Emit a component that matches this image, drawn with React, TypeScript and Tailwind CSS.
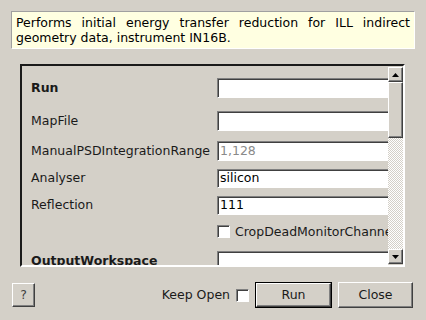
import React from "react";

const raised =
  "border border-t-white border-l-white border-r-[#404040] border-b-[#404040] shadow-[inset_-1px_-1px_0_#808080]";
const sunken =
  "border border-t-[#808080] border-l-[#808080] border-r-white border-b-white shadow-[inset_1px_1px_0_#404040]";

function Field({ value, muted, h = "h-[20px]" }: { value?: string; muted?: boolean; h?: string }) {
  return (
    <div className={`${sunken} ${h} w-[190px] shrink-0 bg-white pl-[2px] flex items-center ${muted ? "text-[#8a8a8a]" : "text-black"}`}>
      {value}
    </div>
  );
}

function Row({ label, bold, mt, children }: { label: string; bold?: boolean; mt: string; children: React.ReactNode }) {
  return (
    <div className={`flex items-center ${mt}`}>
      <div className={`w-[186px] shrink-0 whitespace-nowrap ${bold ? "font-bold" : ""}`}>{label}</div>
      {children}
    </div>
  );
}

function Arrow({ up }: { up?: boolean }) {
  return (
    <div className={`${raised} h-[15px] w-[15px] bg-[#d4d0c8] flex items-center justify-center`}>
      <svg width="7" height="4" viewBox="0 0 7 4">
        {up ? <path d="M3.5 0 L7 4 L0 4 Z" fill="#000" /> : <path d="M0 0 L7 0 L3.5 4 Z" fill="#000" />}
      </svg>
    </div>
  );
}

export default function App() {
  return (
    <div
      className="w-[426px] h-[320px] bg-[#d4d0c8] overflow-hidden text-[12.5px] text-[#1a1a1a]"
      style={{ fontFamily: '"DejaVu Sans", sans-serif' }}
    >
      {/* Description */}
      <div className="pt-[11px] px-[11px]">
        <div className="h-[38px] w-[404px] bg-[#ffffe1] border border-t-[#a0a0a0] border-l-[#a0a0a0] border-r-white border-b-white px-[4px] pt-[3px] leading-[15px] text-justify text-black">
          Performs initial energy transfer reduction for ILL indirect geometry data, instrument IN16B.
        </div>
      </div>

      {/* Properties scroll area */}
      <div className="mt-[15px] ml-[20px] w-[385px] h-[203px] border-2 border-t-[#1a1a1a] border-l-[#1a1a1a] border-r-white border-b-white flex">
        <div className="flex-1 overflow-hidden pl-[9px] pt-[12px]">
          <Row label="Run" bold mt="">
            <Field />
          </Row>
          <Row label="MapFile" mt="mt-[13px]">
            <Field />
          </Row>
          <Row label="ManualPSDIntegrationRange" mt="mt-[10px]">
            <Field value="1,128" muted />
          </Row>
          <Row label="Analyser" mt="mt-[8px]">
            <Field value="silicon" h="h-[19px]" />
          </Row>
          <Row label="Reflection" mt="mt-[8px]">
            <Field value="111" h="h-[19px]" />
          </Row>
          <div className="flex items-center h-[13px] leading-[13px] mt-[10px] pl-[186px] whitespace-nowrap">
            <div className={`${sunken} h-[13px] w-[13px] shrink-0 bg-white`} />
            <span className="ml-[5px]">CropDeadMonitorChannels</span>
          </div>
          <Row label="OutputWorkspace" bold mt="mt-[13px]">
            <Field />
          </Row>
        </div>
        {/* Scrollbar */}
        <div className="w-[15px] mt-[1px] mb-[1px] flex flex-col">
          <Arrow up />
          <div className={`${raised} h-[56px] bg-[#d4d0c8]`} />
          <div className="flex-1 bg-[repeating-conic-gradient(#ffffff_0_25%,#d4d0c8_0_50%)] bg-[length:2px_2px]" />
          <Arrow />
        </div>
      </div>

      {/* Buttons */}
      <div className="mt-[15px] flex items-center pl-[12px] pr-[13px]">
        <button className={`${raised} h-[24px] w-[23px] bg-[#d4d0c8] text-[#404040]`}>?</button>
        <div className="flex-1" />
        <span>Keep Open</span>
        <div className={`${sunken} ml-[6px] h-[13px] w-[13px] bg-white`} />
        <div className="ml-[6px] border border-black">
          <button className={`${raised} h-[24px] w-[75px] bg-[#d4d0c8] text-[#1a1a1a]`}>Run</button>
        </div>
        <button className={`${raised} ml-[6px] h-[26px] w-[75px] bg-[#d4d0c8] text-[#1a1a1a]`}>Close</button>
      </div>
    </div>
  );
}
